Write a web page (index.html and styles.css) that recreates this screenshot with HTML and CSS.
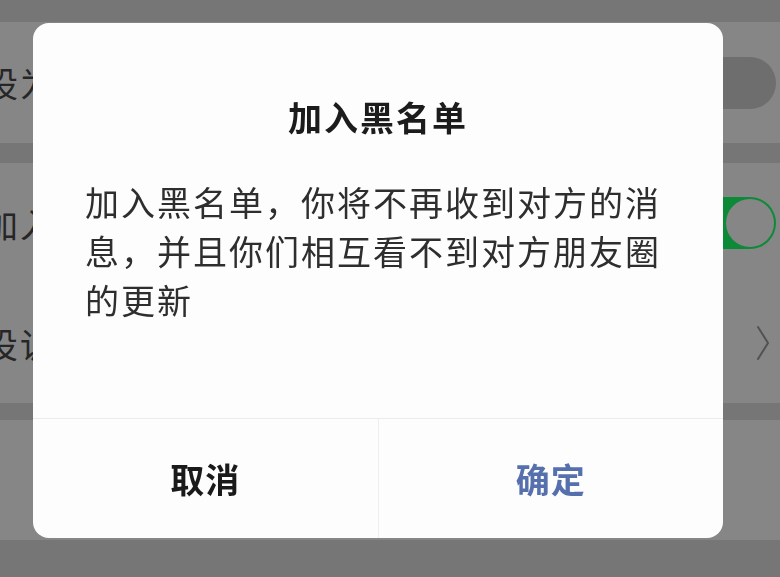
FILE: index.html
```html
<!DOCTYPE html>
<html lang="zh-CN">
<head>
<meta charset="utf-8">
<title>加入黑名单</title>
<link rel="stylesheet" href="styles.css">
</head>
<body>
<main class="settings">
  <div class="top-strip"></div>
  <section class="group group-first">
    <div class="cell">
      <span class="label">设为星标朋友</span>
      <span class="switch switch-off"><span class="knob"></span></span>
    </div>
  </section>
  <section class="group group-second">
    <div class="cell">
      <span class="label">加入黑名单</span>
      <span class="switch switch-on"><span class="knob"></span></span>
    </div>
    <div class="cell">
      <span class="label">投诉</span>
      <svg class="chevron" width="14" height="36" viewBox="0 0 14 36" aria-hidden="true">
        <polyline points="2,2 12,18 2,34" fill="none" stroke="#525252" stroke-width="2" stroke-linecap="round" stroke-linejoin="round"/>
      </svg>
    </div>
  </section>
  <section class="group group-third">
    <div class="cell cell-center"><span class="danger">删除</span></div>
  </section>
</main>

<div class="mask">
  <div class="dialog" role="dialog" aria-labelledby="dlg-title">
    <div class="dialog-content">
      <h1 class="dialog-title" id="dlg-title">加入黑名单</h1>
      <p class="dialog-text">加入黑名单，你将不再收到对方的消息，并且你们相互看不到对方朋友圈的更新</p>
    </div>
    <div class="dialog-footer">
      <button class="dialog-btn btn-cancel" type="button">取消</button>
      <button class="dialog-btn btn-ok" type="button">确定</button>
    </div>
  </div>
</div>
</body>
</html>
```

FILE: styles.css
```css
* {
  box-sizing: border-box;
}

html, body {
  margin: 0;
  padding: 0;
}

body {
  width: 780px;
  height: 577px;
  overflow: hidden;
  background: #767676;
  font-family: "Noto Sans CJK SC", "Noto Sans", sans-serif;
}

.settings {
  display: flex;
  flex-direction: column;
  width: 780px;
}

.top-strip {
  height: 22px;
}

.group {
  background: #868686;
}

.group-first {
  height: 121px;
}

.group-second {
  margin-top: 20px;
}

.group-third {
  margin-top: 17px;
}

.cell {
  height: 120px;
  display: flex;
  align-items: center;
  justify-content: space-between;
}

.group-first .cell {
  height: 121px;
}

.cell-center {
  justify-content: center;
}

.label {
  margin-left: -16px;
  font-size: 34px;
  letter-spacing: 2px;
  color: #262626;
}

.danger {
  font-size: 34px;
  color: #7a3030;
}

.switch {
  position: relative;
  width: 100px;
  height: 52px;
  margin-right: 4px;
  border-radius: 26px;
  display: flex;
  align-items: center;
  padding: 0 2px;
}

.switch-off {
  width: 106px;
  background: #6e6e6e;
  justify-content: flex-start;
}

.switch-on {
  background: #0c8a37;
  justify-content: flex-end;
}

.knob {
  width: 48px;
  height: 48px;
  border-radius: 50%;
  background: #868686;
}

.chevron {
  margin-right: 10px;
}

.mask {
  position: fixed;
  inset: 0;
}

.dialog {
  position: absolute;
  left: 33px;
  top: 23px;
  width: 690px;
  height: 515px;
  border-radius: 16px;
  background: #fdfdfe;
  display: flex;
  flex-direction: column;
  overflow: hidden;
}

.dialog-content {
  flex: 1;
  padding: 70px 52px 0;
}

.dialog-title {
  margin: 0;
  text-align: center;
  font-size: 34px;
  line-height: 48px;
  font-weight: 600;
  letter-spacing: 2px;
  color: #1c1c1c;
}

.dialog-text {
  margin: 36px 0 0;
  font-size: 34px;
  line-height: 49px;
  letter-spacing: 2px;
  color: #2e2e2e;
}

.dialog-footer {
  height: 120px;
  display: flex;
  border-top: 1px solid #ebebef;
}

.dialog-btn {
  flex: 1;
  margin: 0;
  padding: 0;
  border: 0;
  background: transparent;
  font-family: inherit;
  font-size: 34px;
  font-weight: 700;
  letter-spacing: 1px;
}

.btn-cancel {
  color: #1a1a1a;
}

.btn-ok {
  color: #5570ad;
  border-left: 1px solid #efeff3;
}
```
